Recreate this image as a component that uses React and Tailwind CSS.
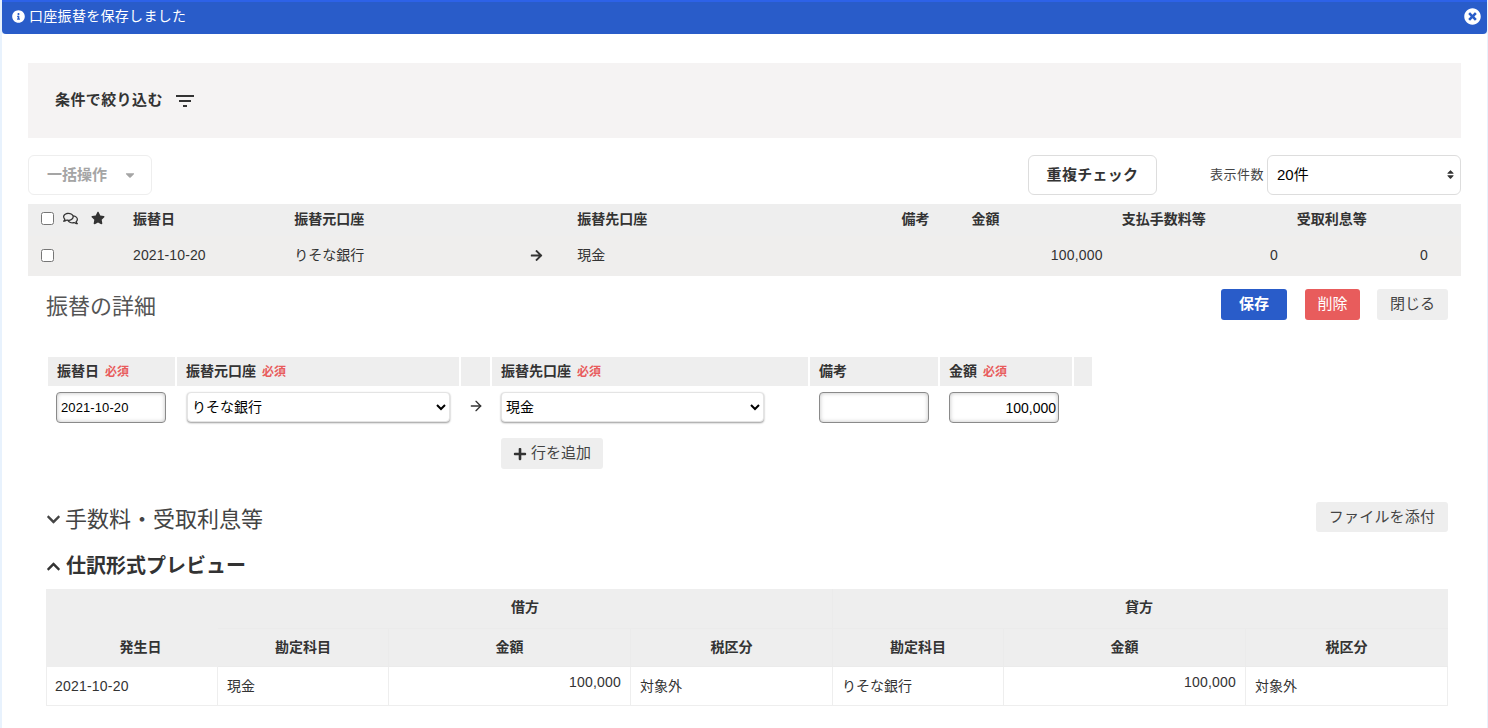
import React from "react";
import { FaInfoCircle, FaTimesCircle, FaStar, FaArrowRight, FaPlus, FaChevronDown, FaChevronUp, FaCaretDown, FaRegComments, FaSort } from "react-icons/fa";
import { MdFilterList } from "react-icons/md";
import { FiArrowRight } from "react-icons/fi";

const font = { fontFamily: '"Liberation Sans", "Noto Sans CJK JP", sans-serif' };

const Required = () => <span className="ml-[6px] text-[12px] font-bold text-[#e85c5c]">必須</span>;

const FormHead = ({ children, required }) => (
  <div className="flex h-[29px] items-center bg-[#eeeeee] pl-[9px] text-[14px] font-bold text-[#333]">
    {children}
    {required && <Required />}
  </div>
);

const inputClass =
  "h-[31px] w-[110px] rounded-[4px] border border-[#8a8a8a] bg-white text-black shadow-[inset_0_0_4px_rgba(0,0,0,0.25)]";
const selectClass =
  "h-[30px] w-[263px] rounded-[4px] border border-[#e4e4e4] bg-white text-[14px] text-black shadow-[0_1px_2px_rgba(0,0,0,0.4)]";

const App = () => {
  return (
    <div className="min-h-[728px] overflow-hidden bg-[#e8f2fd] pl-[2px] pr-[1px] text-[#333]" style={font}>
      {/* alert */}
      <div className="flex h-[34px] items-center justify-between rounded-b-[4px] border-t-2 border-[#2d62e8] bg-[#295cc9] pb-[3px] pl-[10px] pr-[6px] text-[14px] tracking-[0.3px] text-white">
        <div className="flex items-center gap-[4px]">
          <FaInfoCircle className="text-[13px]" />
          <span>口座振替を保存しました</span>
        </div>
        <FaTimesCircle className="text-[17px]" />
      </div>

      <div className="h-[694px] bg-white px-[26px] pt-[29px]">
        {/* filter panel */}
        <div className="flex h-[75px] items-center bg-[#f5f3f3] pl-[27px] text-[15px] font-bold tracking-[0.4px] text-[#333]">
          条件で絞り込む
          <MdFilterList className="ml-[10px] text-[24px]" />
        </div>

        {/* toolbar */}
        <div className="mt-[17px] flex h-[40px] items-center justify-between">
          <button className="flex h-[40px] w-[124px] items-center rounded-[6px] border border-[#eeeeee] bg-white pl-[18px] text-[15px] font-bold text-[#a5a5a5]">
            一括操作
            <FaCaretDown className="ml-[16px] text-[14px]" />
          </button>
          <div className="flex items-center">
            <button className="h-[40px] w-[129px] rounded-[6px] border border-[#dddddd] bg-white text-[15px] font-bold tracking-[0.3px] text-[#333]">
              重複チェック
            </button>
            <span className="ml-[53px] text-[13px] tracking-[0.5px] text-[#444]">表示件数</span>
            <div className="relative ml-[3px]">
              <select className="h-[40px] w-[194px] appearance-none rounded-[6px] border border-[#dddddd] bg-white pl-[9px] text-[15px] text-black">
                <option>20件</option>
              </select>
              <FaSort className="absolute right-[5px] top-[14px] text-[11px] text-[#333]" />
            </div>
          </div>
        </div>

        {/* list */}
        <table className="mt-[9px] w-full table-fixed border-collapse text-[14px]">
          <colgroup>
            <col className="w-[28px]" />
            <col className="w-[28px]" />
            <col className="w-[36px]" />
            <col className="w-[161px]" />
            <col className="w-[236px]" />
            <col className="w-[47px]" />
            <col className="w-[324px]" />
            <col className="w-[70px]" />
            <col className="w-[150px]" />
            <col className="w-[175px]" />
            <col className="w-[150px]" />
            <col className="w-[27px]" />
          </colgroup>
          <thead>
            <tr className="h-[32px] bg-[#eeeeee] font-bold">
              <th className="pb-[4px] pl-[13px] text-left font-normal"><input type="checkbox" className="block h-[13px] w-[13px]" /></th>
              <th className="pb-[4px] pl-[7px] text-left font-normal"><FaRegComments className="text-[15px]" /></th>
              <th className="pb-[4px] pl-[7px] text-left font-normal"><FaStar className="text-[14px]" /></th>
              <th className="pb-[2px] pl-[13px] text-left">振替日</th>
              <th className="pb-[2px] pl-[13px] text-left">振替元口座</th>
              <th></th>
              <th className="pb-[2px] pl-[13px] text-left">振替先口座</th>
              <th className="pb-[2px] pl-[13px] text-left">備考</th>
              <th className="pb-[2px] pl-[13px] text-left">金額</th>
              <th className="pb-[2px] pl-[13px] text-left">支払手数料等</th>
              <th className="pb-[2px] pl-[13px] text-left">受取利息等</th>
              <th></th>
            </tr>
          </thead>
          <tbody>
            <tr className="h-[40px] bg-[#efeeed]">
              <td className="pb-[2px] pl-[13px]"><input type="checkbox" className="block h-[13px] w-[13px]" /></td>
              <td></td>
              <td></td>
              <td className="pb-[2px] pl-[13px] tracking-[0.1px]">2021-10-20</td>
              <td className="pb-[2px] pl-[13px]">りそな銀行</td>
              <td className="pb-[2px] pl-[13px]"><FaArrowRight className="text-[13px]" /></td>
              <td className="pb-[2px] pl-[13px]">現金</td>
              <td></td>
              <td className="pb-[2px] pr-[6px] text-right tracking-[0.2px]">100,000</td>
              <td className="pb-[2px] pr-[6px] text-right">0</td>
              <td className="pb-[2px] pr-[6px] text-right">0</td>
              <td></td>
            </tr>
          </tbody>
        </table>

        {/* detail header */}
        <div className="mt-[13px] flex h-[31px] items-start justify-between pl-[18px] pr-[13px]">
          <h2 className="h-[31px] text-[22px] leading-[35px] text-[#555]">振替の詳細</h2>
          <div className="flex text-[15px]">
            <button className="h-[31px] w-[66px] rounded-[3px] bg-[#295cc9] font-bold text-white">保存</button>
            <button className="ml-[18px] h-[31px] w-[55px] rounded-[3px] bg-[#e85c5c] text-white">削除</button>
            <button className="ml-[17px] h-[31px] w-[71px] rounded-[3px] bg-[#eeeeee] text-[#444]">閉じる</button>
          </div>
        </div>

        {/* transfer form */}
        <div className="mt-[37px] ml-[20px] grid w-[1044px] grid-cols-[127px_282px_29px_316px_128px_132px_18px] gap-x-[2px]">
          <FormHead required>振替日</FormHead>
          <FormHead required>振替元口座</FormHead>
          <FormHead />
          <FormHead required>振替先口座</FormHead>
          <FormHead>備考</FormHead>
          <FormHead required>金額</FormHead>
          <FormHead />

          <div className="pl-[8px] pt-[6px]">
            <input defaultValue="2021-10-20" className={inputClass + " pl-[4px] text-[13px] tracking-[0.1px]"} />
          </div>
          <div className="pl-[10px] pt-[6px]">
            <select className={selectClass}>
              <option>りそな銀行</option>
            </select>
          </div>
          <div className="flex justify-center pt-[12px]">
            <FiArrowRight className="text-[16px]" />
          </div>
          <div className="pl-[9px] pt-[6px]">
            <select className={selectClass}>
              <option>現金</option>
            </select>
            <button className="mt-[16px] flex h-[31px] w-[102px] items-center justify-center rounded-[3px] bg-[#eeeeee] text-[15px] text-[#444]">
              <FaPlus className="mr-[4px] text-[14px] text-[#333]" />
              行を追加
            </button>
          </div>
          <div className="pl-[9px] pt-[6px]">
            <input className={inputClass} />
          </div>
          <div className="pl-[9px] pt-[6px]">
            <input defaultValue="100,000" className={inputClass + " pr-[2px] text-right text-[14px]"} />
          </div>
          <div></div>
        </div>

        {/* fees */}
        <div className="mt-[33px] flex h-[30px] items-start justify-between pl-[18px] pr-[13px]">
          <h3 className="flex h-[30px] items-center pt-[4px] text-[22px] text-[#444]">
            <FaChevronDown className="mr-[4px] text-[15px]" />
            手数料・受取利息等
          </h3>
          <button className="h-[30px] w-[132px] rounded-[3px] bg-[#eeeeee] text-[15px] tracking-[0.2px] text-[#444]">ファイルを添付</button>
        </div>

        {/* preview */}
        <h3 className="mt-[19px] flex h-[30px] items-center pl-[18px] text-[20px] font-bold text-[#333]">
          <FaChevronUp className="mr-[5px] text-[15px]" />
          仕訳形式プレビュー
        </h3>
        <div className="mt-[8px] pl-[18px] pr-[14px]">
          <table className="w-full table-fixed border-collapse text-[14px]">
            <colgroup>
              <col className="w-[171px]" />
              <col className="w-[171px]" />
              <col className="w-[242px]" />
              <col className="w-[202px]" />
              <col className="w-[171px]" />
              <col className="w-[242px]" />
              <col className="w-[202px]" />
            </colgroup>
            <thead className="bg-[#eeeeee] font-bold">
              <tr className="h-[39px]">
                <th className="border border-[#eeeeee]"></th>
                <th colSpan={3} className="border border-[#ebebeb] border-t-[#eeeeee] pb-[3px]">借方</th>
                <th colSpan={3} className="border border-[#ebebeb] border-t-[#eeeeee] border-r-[#eeeeee] pb-[3px] pr-[2px]">貸方</th>
              </tr>
              <tr className="h-[38px]">
                <th className="border border-[#eeeeee] pl-[17px]">発生日</th>
                <th className="border border-[#ebebeb]">勘定科目</th>
                <th className="border border-[#ebebeb]">金額</th>
                <th className="border border-[#ebebeb]">税区分</th>
                <th className="border border-[#ebebeb]">勘定科目</th>
                <th className="border border-[#ebebeb]">金額</th>
                <th className="border border-[#ebebeb] border-r-[#eeeeee]">税区分</th>
              </tr>
            </thead>
            <tbody>
              <tr className="h-[39px]">
                <td className="border border-[#eeeeee] pl-[8px] tracking-[0.2px]">2021-10-20</td>
                <td className="border border-[#eeeeee] pl-[9px]">現金</td>
                <td className="border border-[#eeeeee] pr-[9px] pb-[8px] text-right tracking-[0.2px]">100,000</td>
                <td className="border border-[#eeeeee] pl-[9px]">対象外</td>
                <td className="border border-[#eeeeee] pl-[9px]">りそな銀行</td>
                <td className="border border-[#eeeeee] pr-[9px] pb-[8px] text-right tracking-[0.2px]">100,000</td>
                <td className="border border-[#eeeeee] pl-[9px]">対象外</td>
              </tr>
            </tbody>
          </table>
        </div>
      </div>
    </div>
  );
};

export default App;
